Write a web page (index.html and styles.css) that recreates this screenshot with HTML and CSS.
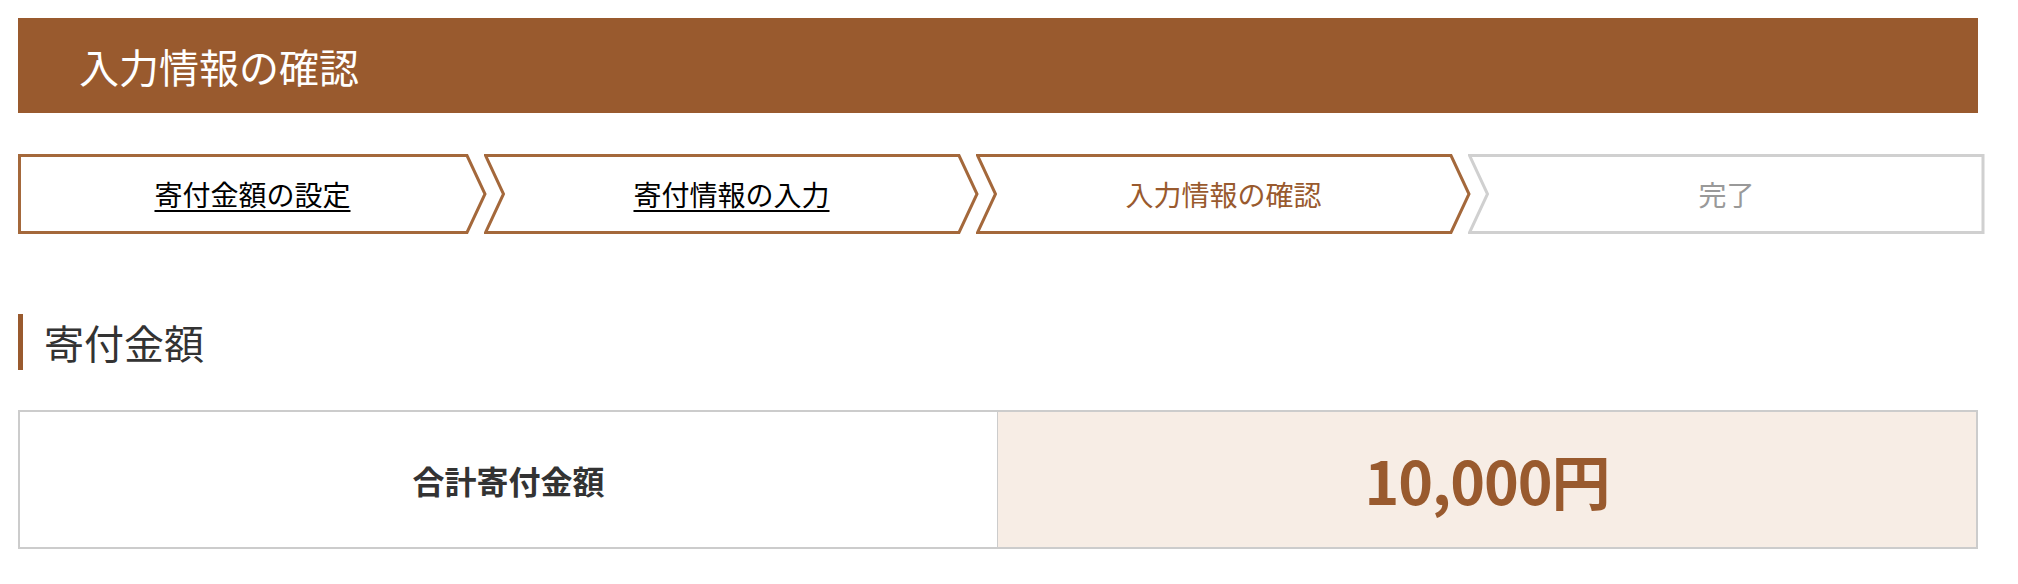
FILE: index.html
```html
<!DOCTYPE html>
<html lang="ja">
<head>
    <meta charset="UTF-8">
    <meta name="viewport" content="width=device-width, initial-scale=1.0">
    <title>入力情報の確認</title>
    <link rel="stylesheet" href="styles.css">
</head>
<body>

    <div class="page">
        <h1 class="page-title">入力情報の確認</h1>

        <ol class="steps">
            <li class="step step-done" style="width: 469px">
                <svg class="step-shape" width="469" height="80" viewBox="0 0 469 80">
                    <polygon points="1.5,1.5 449,1.5 467,40 449,78.5 1.5,78.5"/>
                </svg>
                <a href="#" class="step-label">寄付金額の設定</a>
            </li>
            <li class="step step-done" style="width: 495px">
                <svg class="step-shape" width="495" height="80" viewBox="0 0 495 80">
                    <polygon points="1.5,1.5 475,1.5 493,40 475,78.5 1.5,78.5 19.5,40"/>
                </svg>
                <a href="#" class="step-label">寄付情報の入力</a>
            </li>
            <li class="step step-current" style="width: 495px">
                <svg class="step-shape" width="495" height="80" viewBox="0 0 495 80">
                    <polygon points="1.5,1.5 475,1.5 493,40 475,78.5 1.5,78.5 19.5,40"/>
                </svg>
                <span class="step-label">入力情報の確認</span>
            </li>
            <li class="step step-todo" style="width: 517px">
                <svg class="step-shape" width="517" height="80" viewBox="0 0 517 80">
                    <polygon points="1.5,1.5 515,1.5 515,78.5 1.5,78.5 19.5,40"/>
                </svg>
                <span class="step-label">完了</span>
            </li>
        </ol>

        <h2 class="section-title">寄付金額</h2>

        <div class="amount-box">
            <div class="amount-label">合計寄付金額</div>
            <div class="amount-value">10,000円</div>
        </div>
    </div>

</body>
</html>
```

FILE: styles.css
```css
body {
    margin: 0;
    font-family: "Noto Sans CJK JP", "Noto Sans", sans-serif;
    color: #333;
    background-color: #fff;
}
.page {
    width: 1960px;
    margin: 18px;
}
.page-title {
    margin: 0;
    height: 95px;
    display: flex;
    align-items: center;
    padding-left: 61px;
    background-color: #995a2e;
    color: #fff;
    font-size: 40px;
    font-weight: normal;
}

/* steps */
.steps {
    list-style: none;
    margin: 41px 0 0;
    padding: 0;
    display: flex;
}
.step {
    display: grid;
    height: 80px;
    flex: none;
}
.step + .step {
    margin-left: -3px;
}
.step-shape,
.step-label {
    grid-area: 1 / 1;
}
.step-shape polygon {
    fill: #fff;
    stroke: #a4683b;
    stroke-width: 3;
    stroke-linejoin: miter;
}
.step-label {
    align-self: center;
    justify-self: center;
    font-size: 28px;
    line-height: 1;
    position: relative;
}
.step-done .step-label {
    color: #000;
    text-decoration: underline;
    text-underline-offset: 4px;
}
.step-current .step-label {
    color: #995a2e;
}
.step-todo .step-label {
    color: #999;
}
.step-todo .step-shape polygon {
    stroke: #d0d0d0;
}

/* amount */
.section-title {
    margin: 80px 0 0;
    border-left: 5px solid #995a2e;
    padding-left: 21px;
    height: 56px;
    line-height: 56px;
    font-size: 40px;
    font-weight: normal;
    color: #333;
}
.amount-box {
    margin-top: 40px;
    display: grid;
    grid-template-columns: 978px 1fr;
    border: 2px solid #ccc;
    height: 135px;
}
.amount-label {
    display: flex;
    align-items: center;
    justify-content: center;
    font-size: 32px;
    font-weight: bold;
    color: #333;
    border-right: 1px solid #ccc;
}
.amount-value {
    display: flex;
    align-items: center;
    justify-content: center;
    background-color: #f7ede5;
    color: #995a2e;
    font-size: 59px;
    font-weight: bold;
    letter-spacing: -1px;
}
```
